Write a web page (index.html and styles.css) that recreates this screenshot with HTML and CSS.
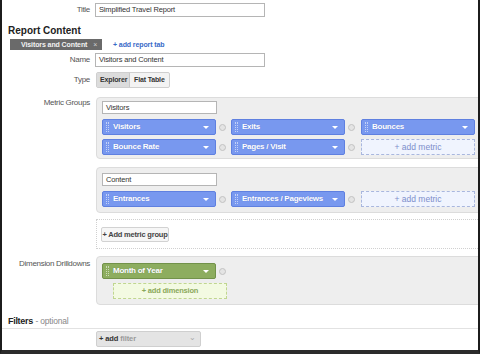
FILE: index.html
```html
<!DOCTYPE html>
<html>
<head>
<meta charset="utf-8">
<link rel="stylesheet" href="styles.css">
</head>
<body>
<div class="frame">
  <div class="row title-row">
    <div class="label">Title</div>
    <div class="field"><div class="input wide">Simplified Travel Report</div></div>
  </div>

  <div class="heading">Report Content</div>

  <div class="tabs">
    <div class="tab">Visitors and Content <span class="x">×</span></div>
    <div class="add-tab">+ add report tab</div>
  </div>

  <div class="row name-row">
    <div class="label">Name</div>
    <div class="field"><div class="input wide">Visitors and Content</div></div>
  </div>

  <div class="row type-row">
    <div class="label">Type</div>
    <div class="field">
      <div class="seg">
        <div class="seg-btn active">Explorer</div>
        <div class="seg-btn">Flat Table</div>
      </div>
    </div>
  </div>

  <div class="row metric-row">
    <div class="label">Metric Groups</div>
    <div class="field">
      <div class="group">
        <div class="input small">Visitors</div>
        <div class="chips">
          <div class="cell"><div class="chip blue"><span class="grip"></span><span class="ct">Visitors</span><span class="arrow"></span></div><span class="rm"></span></div>
          <div class="cell"><div class="chip blue"><span class="grip"></span><span class="ct">Exits</span><span class="arrow"></span></div><span class="rm"></span></div>
          <div class="cell"><div class="chip blue"><span class="grip"></span><span class="ct">Bounces</span><span class="arrow"></span></div></div>
          <div class="cell"><div class="chip blue"><span class="grip"></span><span class="ct">Bounce Rate</span><span class="arrow"></span></div><span class="rm"></span></div>
          <div class="cell"><div class="chip blue"><span class="grip"></span><span class="ct">Pages / Visit</span><span class="arrow"></span></div><span class="rm"></span></div>
          <div class="cell"><div class="add-metric">+ add metric</div></div>
        </div>
      </div>
      <div class="group group2">
        <div class="input small">Content</div>
        <div class="chips">
          <div class="cell"><div class="chip blue"><span class="grip"></span><span class="ct">Entrances</span><span class="arrow"></span></div><span class="rm"></span></div>
          <div class="cell"><div class="chip blue"><span class="grip"></span><span class="ct">Entrances / Pageviews</span><span class="arrow"></span></div><span class="rm"></span></div>
          <div class="cell"><div class="add-metric">+ add metric</div></div>
        </div>
      </div>
      <div class="add-group">
        <div class="add-group-btn">+ Add metric group</div>
      </div>
    </div>
  </div>

  <div class="row dim-row">
    <div class="label dim-label">Dimension Drilldowns</div>
    <div class="field">
      <div class="group dim-group">
        <div class="cell"><div class="chip green"><span class="grip"></span><span class="ct">Month of Year</span><span class="arrow"></span></div><span class="rm"></span></div>
        <div class="add-dim">+ add dimension</div>
      </div>
    </div>
  </div>

  <div class="filters-head"><b>Filters</b> <span class="opt">- optional</span></div>

  <div class="add-filter"><span class="plus">+ add</span> <span class="fl">filter</span><span class="dd">⌄</span></div>
</div>
</body>
</html>
```

FILE: styles.css
```css
html, body {
  margin: 0;
  padding: 0;
  background: #fff;
}
body {
  font-family: "Liberation Sans", Arial, sans-serif;
  font-size: 9px;
  line-height: 12px;
  width: 480px;
  height: 354px;
  overflow: hidden;
}
.frame {
  box-sizing: border-box;
  width: 480px;
  height: 354px;
  border-left: 2px solid #1c1c1c;
  border-right: 2px solid #1c1c1c;
  border-bottom: 4px solid #2b2b2b;
  overflow: hidden;
  white-space: nowrap;
}
.row {
  display: grid;
  grid-template-columns: 88px 1fr;
  column-gap: 5px;
}
.label {
  font-size: 8px;
  letter-spacing: -0.3px;
  color: #555;
  text-align: right;
  line-height: 12px;
}
.field {
  min-width: 0;
}
.input {
  box-sizing: border-box;
  height: 14px;
  border: 1px solid #b5b5b5;
  background: #fff;
  font-size: 7.5px;
  letter-spacing: -0.15px;
  color: #333;
  line-height: 12px;
  padding-left: 3px;
}
.input.wide {
  width: 170px;
}
.input.small {
  width: 115px;
  height: 13px;
  line-height: 11px;
  font-size: 7.5px;
  letter-spacing: -0.15px;
}
.title-row {
  margin-top: 3px;
}
.title-row .label,
.name-row .label {
  padding-top: 1px;
}
.heading {
  margin-top: 7px;
  padding-left: 6px;
  font-size: 10px;
  font-weight: bold;
  line-height: 14px;
  color: #222;
}
.tabs {
  margin-top: 1px;
  display: flex;
  align-items: center;
  padding-left: 8px;
  height: 11px;
}
.tab {
  box-sizing: border-box;
  width: 92px;
  height: 11px;
  background: #6a6a6a;
  color: #f2f2f2;
  font-size: 7px;
  letter-spacing: -0.1px;
  font-weight: bold;
  line-height: 11px;
  padding-left: 11px;
}
.tab .x {
  color: #cfcfcf;
  font-weight: normal;
  margin-left: 4px;
}
.add-tab {
  margin-left: 11px;
  font-size: 7px;
  letter-spacing: -0.1px;
  font-weight: bold;
  color: #3a6ac8;
}
.name-row {
  margin-top: 3px;
}
.type-row {
  margin-top: 5px;
}
.type-row .label {
  padding-top: 2px;
}
.seg {
  display: flex;
  width: fit-content;
  margin-left: 1px;
  height: 16px;
  border: 1px solid #cfcfcf;
  border-radius: 2px;
  background: #f3f3f3;
  box-sizing: border-box;
}
.seg-btn {
  font-size: 7px;
  letter-spacing: -0.15px;
  font-weight: bold;
  color: #333;
  line-height: 14px;
  padding: 0 4px;
}
.seg-btn.active {
  width: 33px;
  box-sizing: border-box;
  background: #dcdcdc;
  border-right: 1px solid #c8c8c8;
  padding: 0 0 0 3px;
}
.metric-row {
  margin-top: 9px;
}
.group {
  box-sizing: border-box;
  margin-left: 1px;
  width: 400px;
  background: #eeeeee;
  border: 1px solid #dcdcdc;
  border-radius: 4px;
  padding: 3px 0 3px 5px;
}
.group2 {
  margin-top: 8px;
  padding: 5px 0 5px 5px;
}
.chips {
  margin-top: 5px;
  display: grid;
  grid-template-columns: 129px 130px 130px;
  row-gap: 4px;
}
.cell {
  display: flex;
  align-items: center;
  height: 16px;
}
.chip {
  box-sizing: border-box;
  position: relative;
  width: 114px;
  height: 16px;
  border-radius: 2px;
  display: flex;
  align-items: center;
  color: #fff;
  font-size: 8px;
  letter-spacing: -0.25px;
  font-weight: bold;
}
.chip.blue {
  background: #7898ef;
  border: 1px solid #5f80e0;
}
.chip.green {
  background: #8dad5f;
  border: 1px solid #72924a;
}
.grip {
  box-sizing: border-box;
  width: 3px;
  height: 10px;
  margin-left: 3px;
  border-left: 1px dotted rgba(255,255,255,0.55);
  border-right: 1px dotted rgba(255,255,255,0.55);
}
.ct {
  margin-left: 4px;
  text-shadow: 0 0 1px rgba(40,60,140,0.3);
}
.arrow {
  position: absolute;
  right: 6px;
  top: 6px;
  width: 0;
  height: 0;
  border-left: 3px solid transparent;
  border-right: 3px solid transparent;
  border-top: 3px solid #fff;
}
.rm {
  box-sizing: border-box;
  width: 7px;
  height: 7px;
  margin-left: 3px;
  border-radius: 50%;
  background: #e4e4e4;
  border: 1px solid #c2c2c2;
}
.add-metric {
  box-sizing: border-box;
  width: 114px;
  height: 16px;
  background: #f0f4fe;
  border: 1px dashed #a9b7de;
  font-size: 8.5px;
  color: #7d8ecb;
  text-align: center;
  line-height: 14px;
}
.add-group {
  box-sizing: border-box;
  margin-top: 6px;
  margin-left: 1px;
  width: 400px;
  height: 30px;
  border: 1px dotted #d0d0d0;
  padding: 7px 0 0 4px;
}
.add-group-btn {
  box-sizing: border-box;
  width: 68px;
  height: 15px;
  border: 1px solid #d2d2d2;
  border-radius: 2px;
  background: #f6f6f6;
  font-size: 7.5px;
  letter-spacing: -0.2px;
  font-weight: bold;
  color: #444;
  line-height: 13px;
  text-align: center;
}
.dim-row {
  margin-top: 7px;
}
.dim-label {
  padding-top: 2px;
}
.dim-group {
  padding: 6px 0 5px 5px;
}
.add-dim {
  box-sizing: border-box;
  margin-top: 4px;
  margin-left: 11px;
  width: 114px;
  height: 16px;
  background: #f3fae2;
  border: 1px dashed #c0d690;
  font-size: 7.5px;
  letter-spacing: -0.2px;
  font-weight: bold;
  color: #8aa85a;
  text-align: center;
  line-height: 14px;
}
.filters-head {
  margin-top: 9px;
  padding-left: 6px;
  line-height: 14px;
  font-size: 9px;
  color: #222;
  border-bottom: 1px solid #e2e2e2;
}
.filters-head b {
  letter-spacing: -0.3px;
}
.filters-head .opt {
  font-size: 8.5px;
  letter-spacing: -0.2px;
  color: #888;
}
.add-filter {
  box-sizing: border-box;
  position: relative;
  margin-top: 2px;
  margin-left: 94px;
  width: 105px;
  height: 16px;
  background: #e4e4e4;
  border: 1px solid #cfcfcf;
  border-radius: 2px;
  font-size: 7.5px;
  letter-spacing: -0.1px;
  line-height: 14px;
  padding-left: 2px;
}
.add-filter .plus {
  color: #333;
  font-weight: bold;
}
.add-filter .fl {
  color: #999;
  font-weight: bold;
}
.add-filter .dd {
  position: absolute;
  right: 4px;
  top: -1px;
  font-size: 8px;
  color: #aaa;
}
```
